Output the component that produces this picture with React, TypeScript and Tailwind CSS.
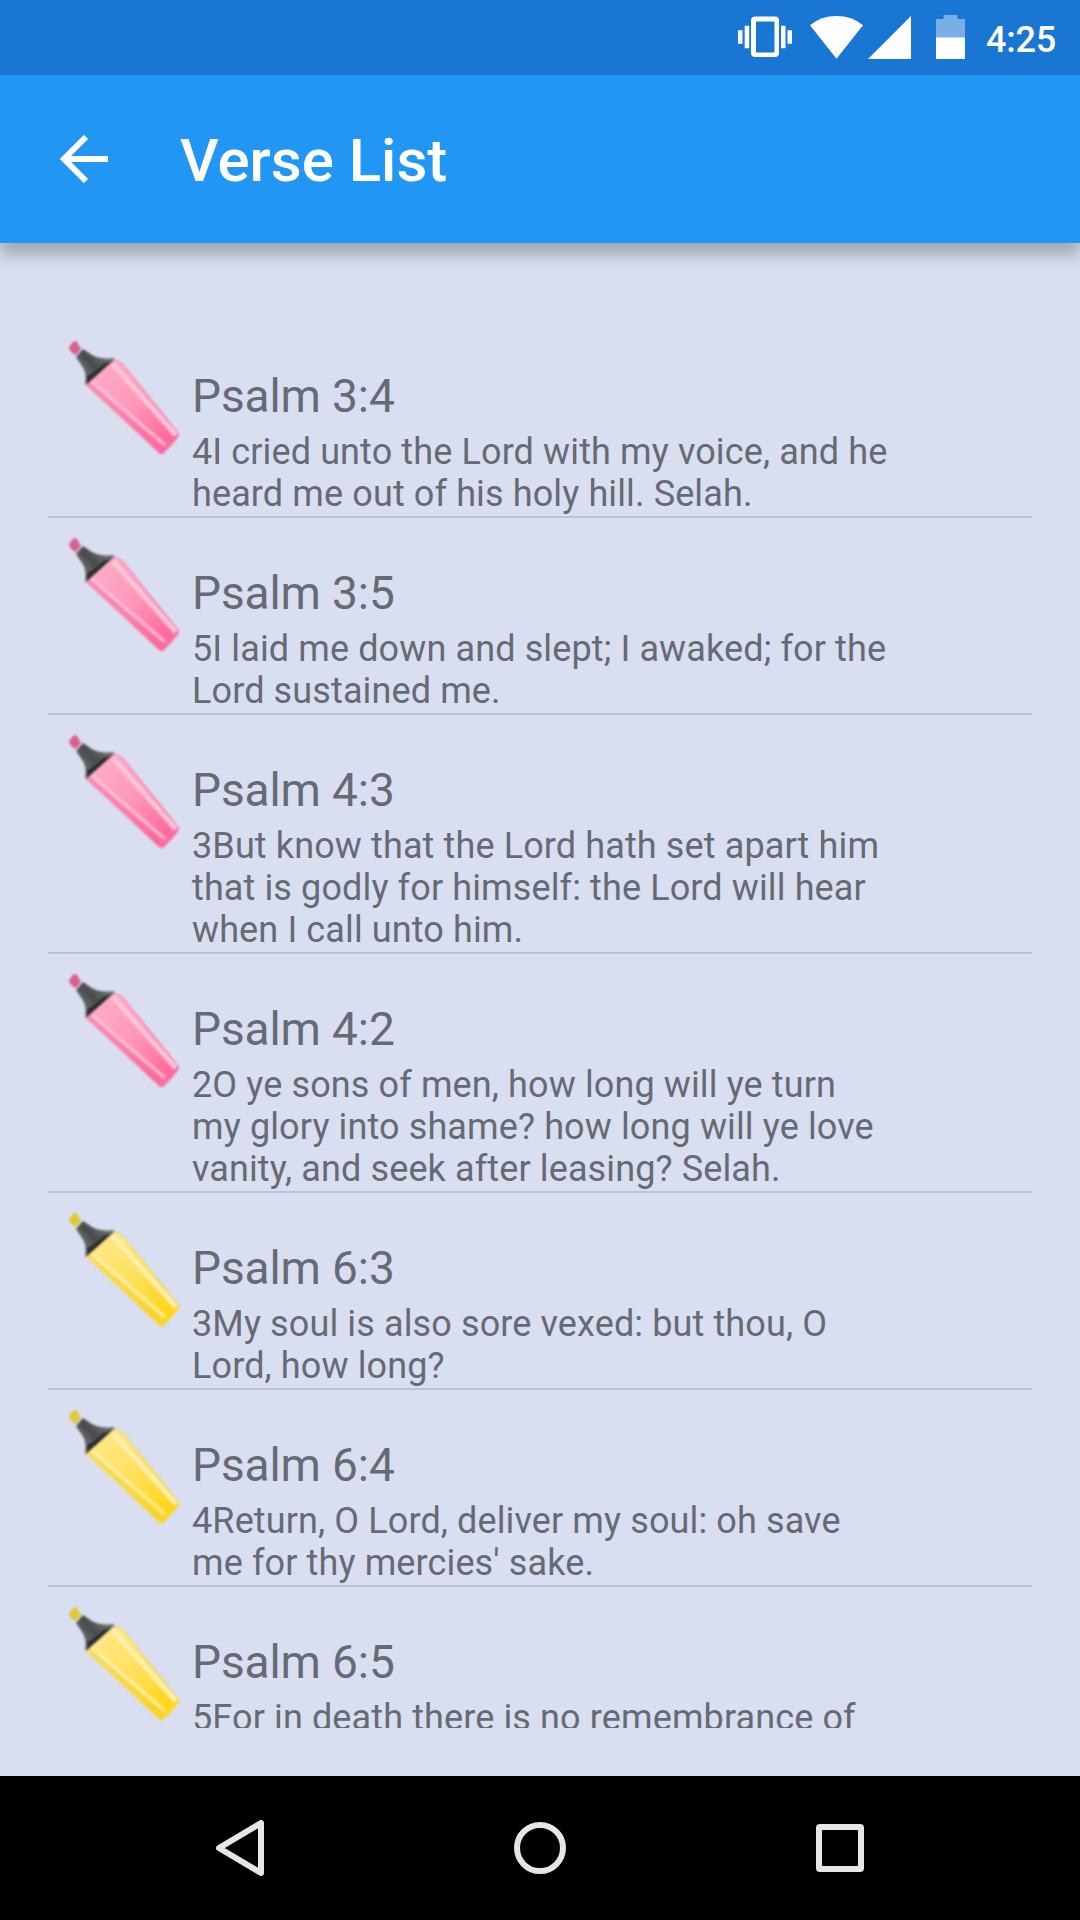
type Ink = 'pink' | 'yellow';

const verses: { title: string; ink: Ink; lines: string[] }[] = [
  { title: 'Psalm 3:4', ink: 'pink', lines: ['4I cried unto the Lord with my voice, and he', 'heard me out of his holy hill. Selah.'] },
  { title: 'Psalm 3:5', ink: 'pink', lines: ['5I laid me down and slept; I awaked; for the', 'Lord sustained me.'] },
  { title: 'Psalm 4:3', ink: 'pink', lines: ['3But know that the Lord hath set apart him', 'that is godly for himself: the Lord will hear', 'when I call unto him.'] },
  { title: 'Psalm 4:2', ink: 'pink', lines: ['2O ye sons of men, how long will ye turn', 'my glory into shame? how long will ye love', 'vanity, and seek after leasing? Selah.'] },
  { title: 'Psalm 6:3', ink: 'yellow', lines: ['3My soul is also sore vexed: but thou, O', 'Lord, how long?'] },
  { title: 'Psalm 6:4', ink: 'yellow', lines: ['4Return, O Lord, deliver my soul: oh save', "me for thy mercies' sake."] },
  { title: 'Psalm 6:5', ink: 'yellow', lines: ['5For in death there is no remembrance of'] },
];

const inks = {
  pink: { light: '#ffaac6', mid: '#ff98ba', deep: '#ff6b9e', edge: '#f46c9c', shine: '#ffc6d8', tip: '#dc5f8e' },
  yellow: { light: '#ffe784', mid: '#ffe160', deep: '#ffd61c', edge: '#f2cf3c', shine: '#fff0b0', tip: '#dfc934' },
};

function Marker({ ink }: { ink: Ink }) {
  const c = inks[ink];
  return (
    <svg className="block h-[120px] w-[120px] blur-[1px]" viewBox="0 0 120 120">
      <defs>
        <linearGradient id={`${ink}-body`} x1="36" y1="34" x2="106" y2="110" gradientUnits="userSpaceOnUse">
          <stop offset="0" stopColor={c.light} />
          <stop offset="0.45" stopColor={c.mid} />
          <stop offset="0.9" stopColor={c.deep} />
        </linearGradient>
        <linearGradient id={`${ink}-neck`} x1="20" y1="38" x2="42" y2="18" gradientUnits="userSpaceOnUse">
          <stop offset="0" stopColor="#6a6d6c" />
          <stop offset="0.4" stopColor="#484b4a" />
          <stop offset="1" stopColor="#747776" />
        </linearGradient>
      </defs>
      <path d="M18 13 L24 17 Q32 24 48 22 L51 25 L23 50 L20 48 Q22 37 17 30 L11 21Z" fill={`url(#${ink}-neck)`} />
      <path d="M47 25 L22 48 L22 40 Q33 35 38 28Z" fill="#1a1c1b" opacity="0.75" />
      <path d="M8 6 Q10 4 12 6 L16 13 L11 19 Q5 17 4 11Z" fill={c.tip} />
      <path d="M49 24 Q56 25 61 32 L114 98 Q115 101 98 118 L95 118 L24 52 Q22 51 21 49Z" fill={`url(#${ink}-body)`} />
      <path d="M21 49 L25 46 L101 114 L97 118 L24 52Z" fill={c.edge} opacity="0.5" />
      <path d="M27 46 L100 109" stroke={c.shine} strokeWidth="3.500" opacity="0.8" fill="none" />
      <path d="M48 28 L111 99" stroke={c.shine} strokeWidth="5" fill="none" />
      <path d="M50 24 Q57 26 61 32 L114 98" stroke={c.edge} strokeWidth="1.200" opacity="0.45" fill="none" />
    </svg>
  );
}

function StatusBar() {
  return (
    <div className="flex h-[75px] items-center justify-end bg-[#1976d2] pr-6 text-white">
      <svg className="h-[75px] w-[54px]" viewBox="738 0 54 75" fill="#fff">
        <path fillRule="evenodd" d="M755 16.500h20q4 0 4 4v32.500q0 4-4 4h-20q-4 0-4-4v-32.500q0-4 4-4zM756 21.500v31h18.500v-31z" />
        <path d="M744.700 25.700h4.500v22.600h-4.500zM738 30.200h4.500v13.600h-4.500zM781 25.700h4.500v22.600h-4.500zM787.500 30.200h4.500v13.600h-4.500z" />
      </svg>
      <svg className="ml-[18px] h-[75px] w-[53px]" viewBox="810 0 53 75" fill="#fff">
        <path d="M836.500 58.700L810 25.200Q821 16 836.500 16T863 25.200Z" />
      </svg>
      <svg className="ml-[5px] h-[75px] w-[43px]" viewBox="868 0 43 75" fill="#fff">
        <path d="M868 59L911 16V59Z" />
      </svg>
      <svg className="ml-[25px] h-[75px] w-[29px]" viewBox="936 0 29 75" fill="#fff">
        <path opacity="0.42" d="M943.500 15h14v4h7.500v18.300h-29V19h7.500z" />
        <path d="M936 37.300h29V59h-29z" />
      </svg>
      <span className="ml-[21px] mt-[4px] w-[70px] whitespace-nowrap text-[36px] leading-[42px] font-medium tracking-[-0.2px]">4:25</span>
    </div>
  );
}

export default function App() {
  return (
    <div className="flex h-[1920px] w-[1080px] flex-col overflow-hidden bg-[#d9dff0] font-['Roboto',sans-serif]">
      <StatusBar />
      <header className="relative flex h-[168px] items-center bg-[#2196f3] text-white shadow-[0_12px_14px_rgba(0,0,0,0.25)]">
        <svg className="ml-[60px] h-12 w-12" viewBox="0 0 48 48" fill="none" stroke="#fff" strokeWidth="6">
          <path d="M48 24H5M26 2L4 24L26 46" />
        </svg>
        <h1 className="ml-[72px] mt-[4px] whitespace-nowrap text-[60px] leading-[70px] font-medium">Verse List</h1>
      </header>
      <main className="mx-12 mt-12 h-[1437px] overflow-hidden pt-[30px] text-[#666a74]">
        {verses.map((v) => (
          <article key={v.title} className="flex items-start border-b-2 border-[#bbc1d7]">
            <div className="ml-[17px] mt-[15px]">
              <Marker ink={v.ink} />
            </div>
            <div className="ml-[7px] whitespace-nowrap pt-12 pb-px">
              <h2 className="text-[46px] leading-[54px] tracking-[-0.1px]">{v.title}</h2>
              <p className="mt-2 text-[36px] leading-[42px] tracking-[0.12px]">
                {v.lines.map((line) => (
                  <span key={line} className="block">{line}</span>
                ))}
              </p>
            </div>
          </article>
        ))}
      </main>
      <nav className="mt-12 flex h-36 shrink-0 items-center justify-between bg-black pr-[216px] pl-[215px]">
        <svg className="h-14 w-[52px]" viewBox="0 0 52 56" fill="none" stroke="#e6e6e6" strokeWidth="6" strokeLinejoin="round">
          <path d="M46 3V53L4 28Z" />
        </svg>
        <div className="mr-[3px] h-[52px] w-[52px] rounded-full border-[6px] border-[#e6e6e6]" />
        <div className="h-12 w-12 rounded-[4px] border-[6px] border-[#e6e6e6]" />
      </nav>
    </div>
  );
}
